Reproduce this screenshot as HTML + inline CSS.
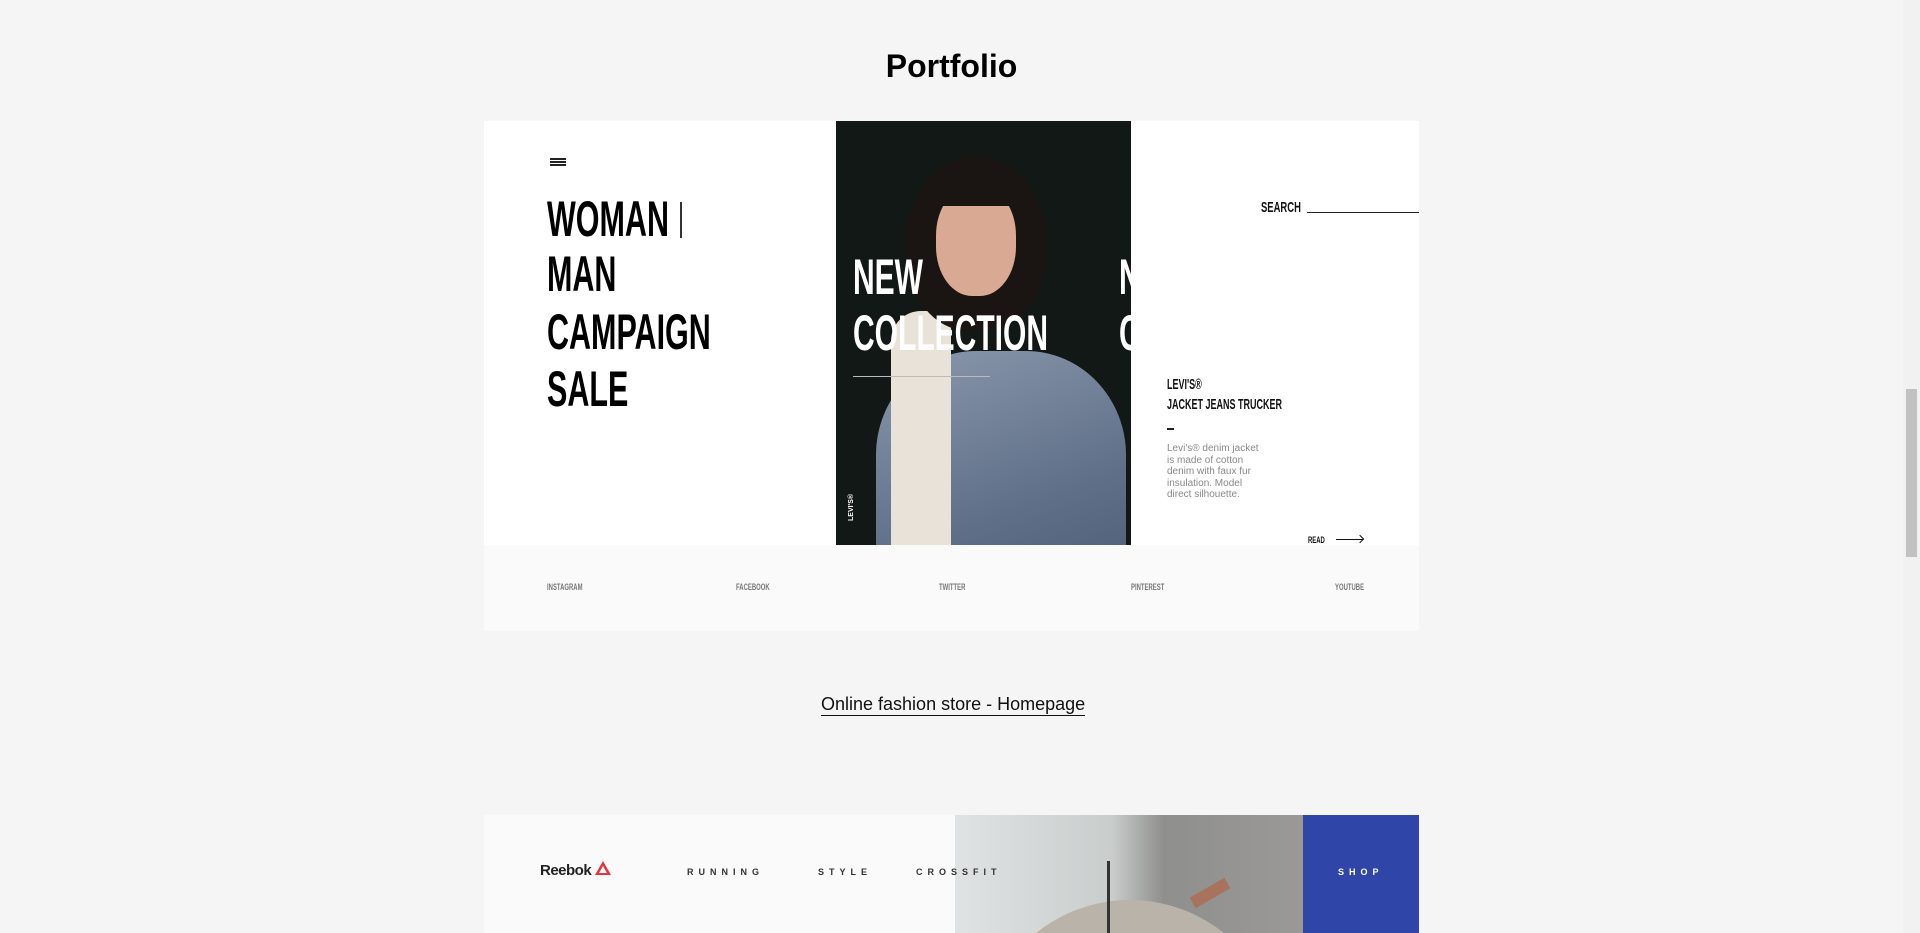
<!DOCTYPE html>
<html><head><meta charset="utf-8"><style>
*{margin:0;padding:0;box-sizing:border-box}
body{width:1920px;height:933px;background:#f5f5f5;overflow:hidden;position:relative;font-family:"Liberation Sans",sans-serif}
.a{position:absolute}
.cond{font-family:"Liberation Sans Narrow","Liberation Sans",sans-serif;font-weight:bold;white-space:nowrap}
.big{font-size:50px;line-height:50px;color:#000;transform:scaleX(.61);transform-origin:left center}
.soc{font-size:9px;color:#777;transform:scaleX(.66);transform-origin:left center;top:582px}
.nav{font-size:9px;letter-spacing:5px;color:#333;font-weight:bold;top:867px}
</style></head><body>
<div class="a" style="left:0;width:1903px;top:48px;text-align:center;font-size:32px;font-weight:bold;color:#000">Portfolio</div>

<div class="a" style="left:484px;top:121px;width:935px;height:510px;background:#fff"></div>
<div class="a" style="left:484px;top:545px;width:935px;height:86px;background:#fafafa"></div>

<div class="a" style="left:550px;top:158px;width:16px;height:8px;border-top:2px solid #222;border-bottom:2px solid #222"></div>
<div class="a" style="left:550px;top:161px;width:16px;height:2px;background:#222"></div>

<div class="a cond big" style="left:547px;top:194px">WOMAN</div>
<div class="a" style="left:680px;top:202px;width:2px;height:36px;background:#333"></div>
<div class="a cond big" style="left:547px;top:249px">MAN</div>
<div class="a cond big" style="left:547px;top:307px">CAMPAIGN</div>
<div class="a cond big" style="left:547px;top:364px">SALE</div>

<div class="a" style="left:836px;top:121px;width:295px;height:424px;background:#111815;overflow:hidden">
  <div class="a" style="left:40px;top:230px;width:250px;height:260px;border-radius:40% 40% 0 0;background:linear-gradient(160deg,#8a98ac,#5f6f88 60%,#4a5a72)"></div>
  <div class="a" style="left:55px;top:190px;width:60px;height:240px;background:#e8e2d8;border-radius:30px 10px 0 0"></div>
  <div class="a" style="left:70px;top:35px;width:140px;height:175px;border-radius:50% 50% 45% 45%;background:#1a1412"></div>
  <div class="a" style="left:100px;top:65px;width:80px;height:110px;border-radius:45%;background:#d9a993"></div>
  <div class="a" style="left:95px;top:55px;width:95px;height:30px;border-radius:40% 40% 0 0;background:#1a1412"></div>
  <div class="a cond" style="left:17px;top:128px;font-size:50px;line-height:56px;color:#fff;transform:scaleX(.6);transform-origin:left top">NEW<br>COLLECTION</div>
  <div class="a cond" style="left:283px;top:128px;font-size:50px;line-height:56px;color:#fff;transform:scaleX(.6);transform-origin:left top">N<br>C</div>
  <div class="a" style="left:17px;top:255px;width:137px;height:1px;background:#bbb"></div>
  <div class="a" style="left:12px;top:400px;font-size:7px;color:#fff;font-weight:bold;transform:rotate(-90deg);transform-origin:left top">LEVI'S®</div>
</div>

<div class="a cond" style="left:1261px;top:199px;font-size:15px;color:#111;transform:scaleX(.63);transform-origin:left center">SEARCH</div>
<div class="a" style="left:1307px;top:212px;width:112px;height:1px;background:#222"></div>

<div class="a cond" style="left:1167px;top:375px;font-size:15px;line-height:20px;color:#111;transform:scaleX(.6);transform-origin:left top">LEVI'S®<br>JACKET JEANS TRUCKER</div>
<div class="a" style="left:1167px;top:428px;width:7px;height:2px;background:#222"></div>
<div class="a" style="left:1167px;top:443px;font-size:10px;line-height:11.5px;color:#888;width:100px">Levi's® denim jacket is made of cotton denim with faux fur insulation. Model direct silhouette.</div>
<div class="a cond" style="left:1308px;top:535px;font-size:9px;color:#111;transform:scaleX(.66);transform-origin:left center">READ</div>
<div class="a" style="left:1336px;top:539px;width:27px;height:1px;background:#111"></div>
<div class="a" style="left:1357px;top:536px;width:6px;height:6px;border-top:1px solid #111;border-right:1px solid #111;transform:rotate(45deg)"></div>

<div class="a cond soc" style="left:547px">INSTAGRAM</div>
<div class="a cond soc" style="left:736px">FACEBOOK</div>
<div class="a cond soc" style="left:939px">TWITTER</div>
<div class="a cond soc" style="left:1131px">PINTEREST</div>
<div class="a cond soc" style="left:1335px">YOUTUBE</div>

<div class="a" style="left:821px;top:693px;font-size:18px;color:#111;border-bottom:1.5px solid #111;line-height:22px">Online fashion store - Homepage</div>

<div class="a" style="left:484px;top:815px;width:471px;height:118px;background:#fafafa"></div>
<div class="a" style="left:955px;top:815px;width:348px;height:118px;background:linear-gradient(90deg,#dfe3e3,#c9cdcc 45%,#8f8f8d 60%,#9a9997);overflow:hidden">
  <div class="a" style="left:25px;top:85px;width:300px;height:300px;border-radius:50%;background:#b9b3aa"></div>
  <div class="a" style="left:152px;top:46px;width:3px;height:80px;background:#333"></div>
  <div class="a" style="left:235px;top:72px;width:40px;height:12px;background:#a8725c;transform:rotate(-30deg)"></div>
</div>
<div class="a" style="left:1303px;top:815px;width:116px;height:118px;background:#2f46a8"></div>
<div class="a" style="left:540px;top:862px;font-size:15px;font-weight:bold;color:#222;letter-spacing:-0.5px">Reebok</div>
<svg class="a" style="left:594px;top:860px" width="18" height="16"><path d="M9 1L17 15H1Z M9 6L13 13H5Z" fill="#e8333a" fill-rule="evenodd"/></svg>
<div class="a nav" style="left:687px">RUNNING</div>
<div class="a nav" style="left:818px">STYLE</div>
<div class="a nav" style="left:916px">CROSSFIT</div>
<div class="a nav" style="left:1338px;color:#fff">SHOP</div>

<div class="a" style="left:1903px;top:0;width:17px;height:933px;background:#f1f1f1"></div>
<div class="a" style="left:1906px;top:389px;width:11px;height:168px;background:#c1c1c1"></div>
</body></html>
